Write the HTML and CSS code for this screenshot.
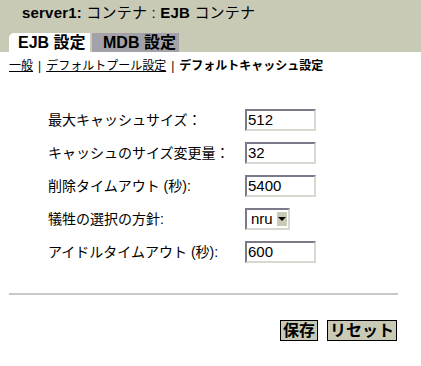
FILE: index.html
```html
<!DOCTYPE html>
<html lang="ja">
<head>
<meta charset="utf-8">
<link rel="stylesheet" href="styles.css">
</head>
<body>
<div class="header">
  <div class="title">server1: <span class="title-jp">コンテナ : </span>EJB <span class="title-jp">コンテナ</span></div>
  <div class="tabs">
    <span class="tab tab-active">EJB 設定</span>
    <span class="tab tab-off">MDB 設定</span>
  </div>
</div>
<div class="subnav">
  <a class="link" href="#">一般</a><span class="sep">|</span><a class="link" href="#">デフォルトプール設定</a><span class="sep">|</span><span class="current">デフォルトキャッシュ設定</span>
</div>
<div class="form">
  <label class="label">最大キャッシュサイズ：</label>
  <div class="field">512</div>
  <label class="label">キャッシュのサイズ変更量：</label>
  <div class="field">32</div>
  <label class="label">削除タイムアウト (秒):</label>
  <div class="field">5400</div>
  <label class="label">犠牲の選択の方針:</label>
  <div class="select"><span class="select-val">nru</span><span class="arrow"></span></div>
  <label class="label">アイドルタイムアウト (秒):</label>
  <div class="field">600</div>
</div>
<div class="rule"></div>
<div class="buttons">
  <span class="btn">保存</span>
  <span class="btn">リセット</span>
</div>
</body>
</html>
```
FILE: styles.css
```css
html, body {
  margin: 0;
  padding: 0;
  background: #ffffff;
}
body {
  font-family: "Liberation Sans", "Noto Sans CJK JP", sans-serif;
  color: #000;
  width: 421px;
  height: 366px;
  overflow: hidden;
}
.header {
  height: 52px;
  background: #c9cab6;
  display: flex;
  flex-direction: column;
  justify-content: space-between;
}
.title {
  padding: 4px 0 0 22px;
  font-size: 15px;
  font-weight: bold;
  line-height: 18px;
  letter-spacing: 0.2px;
}
.title-jp {
  font-weight: normal;
}
.tabs {
  display: flex;
  padding-left: 9px;
  gap: 2px;
}
.tab {
  height: 19px;
  line-height: 20px;
  font-size: 16px;
  font-weight: bold;
  padding: 0 6px 0 9px;
  white-space: nowrap;
}
.tab-active {
  background: #fff;
  border-top-left-radius: 5px;
  width: 66px;
}
.tab-off {
  background: #a2a2a8;
  padding-left: 11px;
  width: 70px;
}
.subnav {
  padding: 6px 0 0 9px;
  font-size: 12px;
  line-height: 16px;
  height: 18px;
}
.link {
  color: #000;
  text-decoration: underline;
}
.sep {
  margin: 0 5px;
}
.current {
  font-weight: bold;
}
.form {
  display: grid;
  grid-template-columns: 197px auto;
  row-gap: 11px;
  padding: 33px 0 0 48px;
  align-items: center;
  justify-items: start;
}
.label {
  font-size: 14px;
  line-height: 22px;
}
.field, .select {
  height: 18px;
  border-style: solid;
  border-width: 2px;
  border-color: #7a7a8a #d8d8d0 #d8d8d0 #7a7a8a;
  font-size: 15px;
  line-height: 18px;
  background: #fff;
}
.field {
  width: 66px;
  padding-left: 1px;
}
.select {
  display: flex;
  align-items: center;
  gap: 4px;
  padding: 0 1px 0 4px;
}
.arrow {
  width: 10px;
  height: 14px;
  background: #c9cab6;
  position: relative;
}
.arrow::after {
  content: "";
  position: absolute;
  left: 1px;
  top: 5px;
  border-left: 4px solid transparent;
  border-right: 4px solid transparent;
  border-top: 4px solid #000;
}
.rule {
  margin: 30px 0 0 9px;
  width: 389px;
  height: 2px;
  background: #c8c8cc;
}
.buttons {
  display: flex;
  justify-content: flex-end;
  gap: 9px;
  padding: 25px 24px 0 0;
}
.btn {
  border: 1px solid #000;
  background: #c9cab6;
  font-size: 16px;
  font-weight: bold;
  line-height: 19px;
  padding: 0 2px;
}
```
